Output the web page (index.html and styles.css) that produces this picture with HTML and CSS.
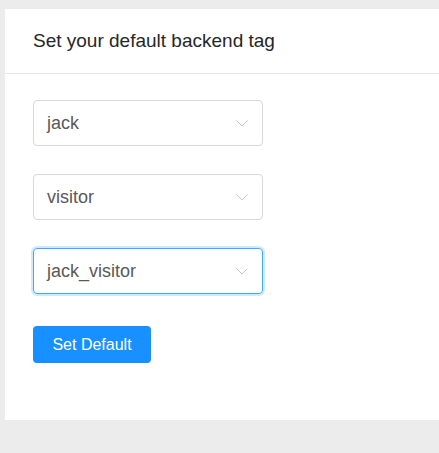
FILE: index.html
```html
<!DOCTYPE html>
<html>
<head>
<meta charset="utf-8">
<link rel="stylesheet" href="styles.css">
</head>
<body>
<div class="card">
  <div class="card-head">Set your default backend tag</div>
  <div class="card-body">
    <div class="select"><span class="value">jack</span><svg class="arrow" width="12" height="7" viewBox="0 0 12 7"><path d="M0.5 0.5 L6 6 L11.5 0.5" fill="none" stroke="#c8c8c8" stroke-width="1"/></svg></div>
    <div class="select"><span class="value">visitor</span><svg class="arrow" width="12" height="7" viewBox="0 0 12 7"><path d="M0.5 0.5 L6 6 L11.5 0.5" fill="none" stroke="#c8c8c8" stroke-width="1"/></svg></div>
    <div class="select focused"><span class="value">jack_visitor</span><svg class="arrow" width="12" height="7" viewBox="0 0 12 7"><path d="M0.5 0.5 L6 6 L11.5 0.5" fill="none" stroke="#c8c8c8" stroke-width="1"/></svg></div>
    <button class="btn">Set Default</button>
  </div>
</div>
</body>
</html>
```
FILE: styles.css
```css
html, body {
  margin: 0;
  padding: 0;
  overflow: hidden;
  background: #ececec;
  font-family: "Liberation Sans", Arial, sans-serif;
}
body {
  padding: 9px 0 0 5px;
  height: 453px;
  box-sizing: border-box;
}
.card {
  width: 450px;
  height: 411px;
  background: #fff;
  box-sizing: border-box;
}
.card-head {
  height: 65px;
  box-sizing: border-box;
  border-bottom: 1px solid #e8e8e8;
  padding: 0 0 0 28px;
  display: flex;
  align-items: center;
  font-size: 19px;
  color: #262626;
}
.card-body {
  padding: 26px 0 0 28px;
  display: flex;
  flex-direction: column;
  align-items: flex-start;
}
.select {
  width: 230px;
  height: 46px;
  box-sizing: border-box;
  border: 1px solid #d9d9d9;
  border-radius: 4px;
  display: flex;
  align-items: center;
  justify-content: space-between;
  padding: 0 14px 0 13px;
  margin-bottom: 28px;
  font-size: 18px;
  color: #595959;
}
.select.focused {
  border-color: #40a9ff;
  box-shadow: 0 0 0 2px rgba(24, 144, 255, 0.2);
}
.arrow {
  display: block;
}
.btn {
  margin-top: 4px;
  width: 118px;
  height: 37px;
  border: none;
  border-radius: 4px;
  background: #1890ff;
  color: #fff;
  font-family: "Liberation Sans", Arial, sans-serif;
  font-size: 16px;
  padding: 0;
}
```
